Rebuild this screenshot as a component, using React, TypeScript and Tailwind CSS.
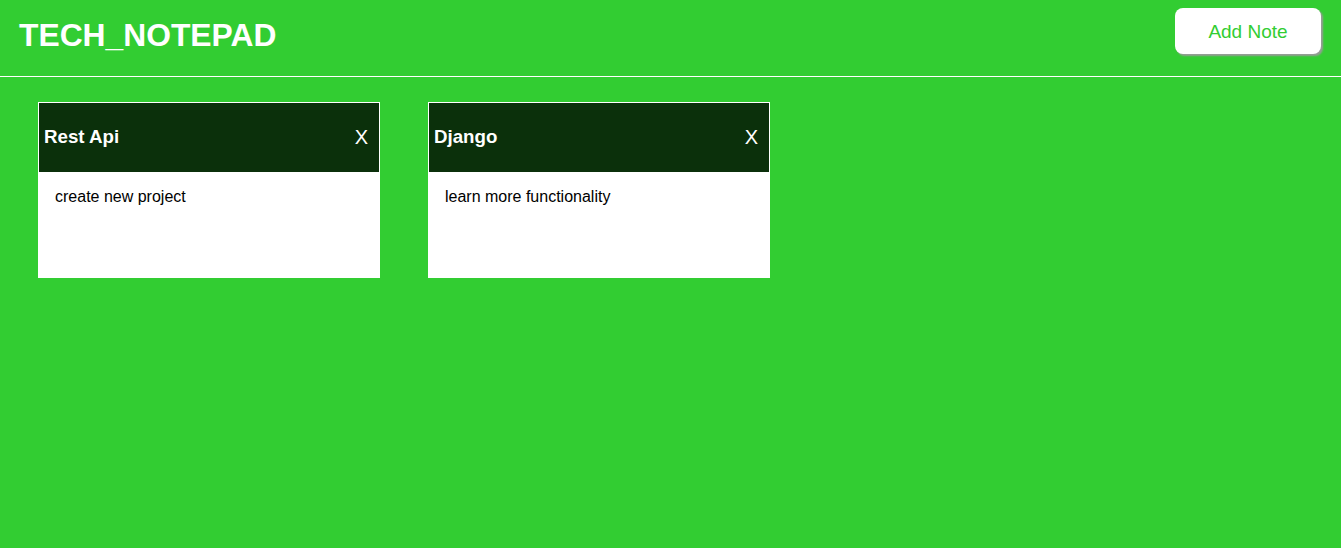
import React from "react";

const notes = [
  { title: "Rest Api", body: "create new project" },
  { title: "Django", body: "learn more functionality" },
];

export default function App() {
  return (
    <div
      className="min-h-[548px] w-full bg-[#32cd32]"
      style={{ fontFamily: '"Liberation Sans", Arial, sans-serif' }}
    >
      <header className="flex h-[77px] items-start justify-between border-b border-white pl-[19px] pr-[20px]">
        <h1 className="pt-[17px] text-[31.8px] font-bold leading-[37px] text-white">TECH_NOTEPAD</h1>
        <button className="mt-[8px] h-[46px] w-[146px] rounded-[8px] bg-white pt-[2px] text-[19px] text-[#32cd32] shadow-[2px_2px_2px_#9a9a9a]">
          Add Note
        </button>
      </header>
      <main className="flex gap-[48px] pl-[38px] pt-[25px]">
        {notes.map((n) => (
          <div key={n.title} className="flex h-[176px] w-[342px] flex-col border border-white bg-white">
            <div className="flex h-[69px] items-center justify-between bg-[#0b300b] pl-[5px] pr-[11px] text-white">
              <h3 className="text-[18.72px] font-bold">{n.title}</h3>
              <span className="pb-[2px] text-[20px] leading-none">X</span>
            </div>
            <div className="pl-4 pt-[13px] text-[16px] text-black">{n.body}</div>
          </div>
        ))}
      </main>
    </div>
  );
}
